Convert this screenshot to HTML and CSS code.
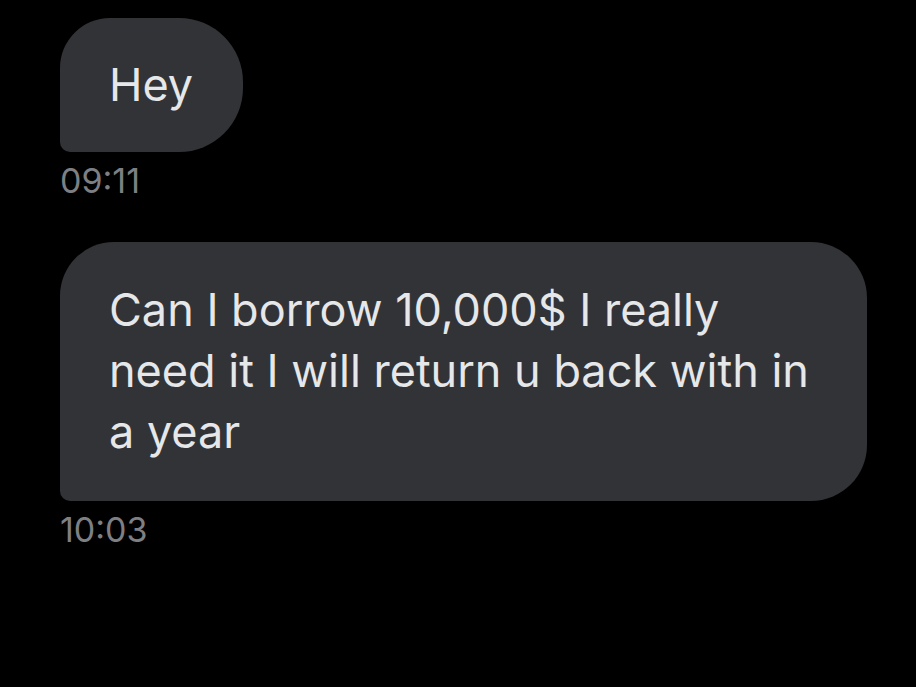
FILE: index.html
```html
<!DOCTYPE html>
<html lang="en">
<head>
<meta charset="utf-8">
<title>Messages</title>
<link rel="stylesheet" href="styles.css">
</head>
<body>
<main class="thread">
  <div class="msg">
    <div class="bubble bubble-short">Hey</div>
    <div class="time">09:11</div>
  </div>
  <div class="msg">
    <div class="bubble bubble-long">Can I borrow 10,000$ I really need it I will return u back with in a year</div>
    <div class="time">10:03</div>
  </div>
</main>
</body>
</html>
```
FILE: styles.css
```css
html, body {
  margin: 0;
  padding: 0;
  background: #000;
  height: 100%;
}
.thread {
  display: flex;
  flex-direction: column;
  gap: 40px;
  padding: 18px 0 0 60px;
  font-family: Inter, "Liberation Sans", sans-serif;
}
.msg {
  display: flex;
  flex-direction: column;
  align-items: flex-start;
  gap: 8px;
}
.bubble {
  background: #323337;
  color: #e6e7e9;
  font-size: 45px;
  line-height: 61px;
  padding: 37px 50px 37px 49px;
}
.bubble-short {
  border-radius: 50px 64px 64px 10px;
  padding-top: 36px;
  padding-right: 50px;
}
.bubble-long {
  width: 708px;
  padding-bottom: 39px;
  border-radius: 54px 56px 56px 10px;
}
.time {
  color: #7e7f83;
  font-size: 34px;
  line-height: 42px;
}
```
